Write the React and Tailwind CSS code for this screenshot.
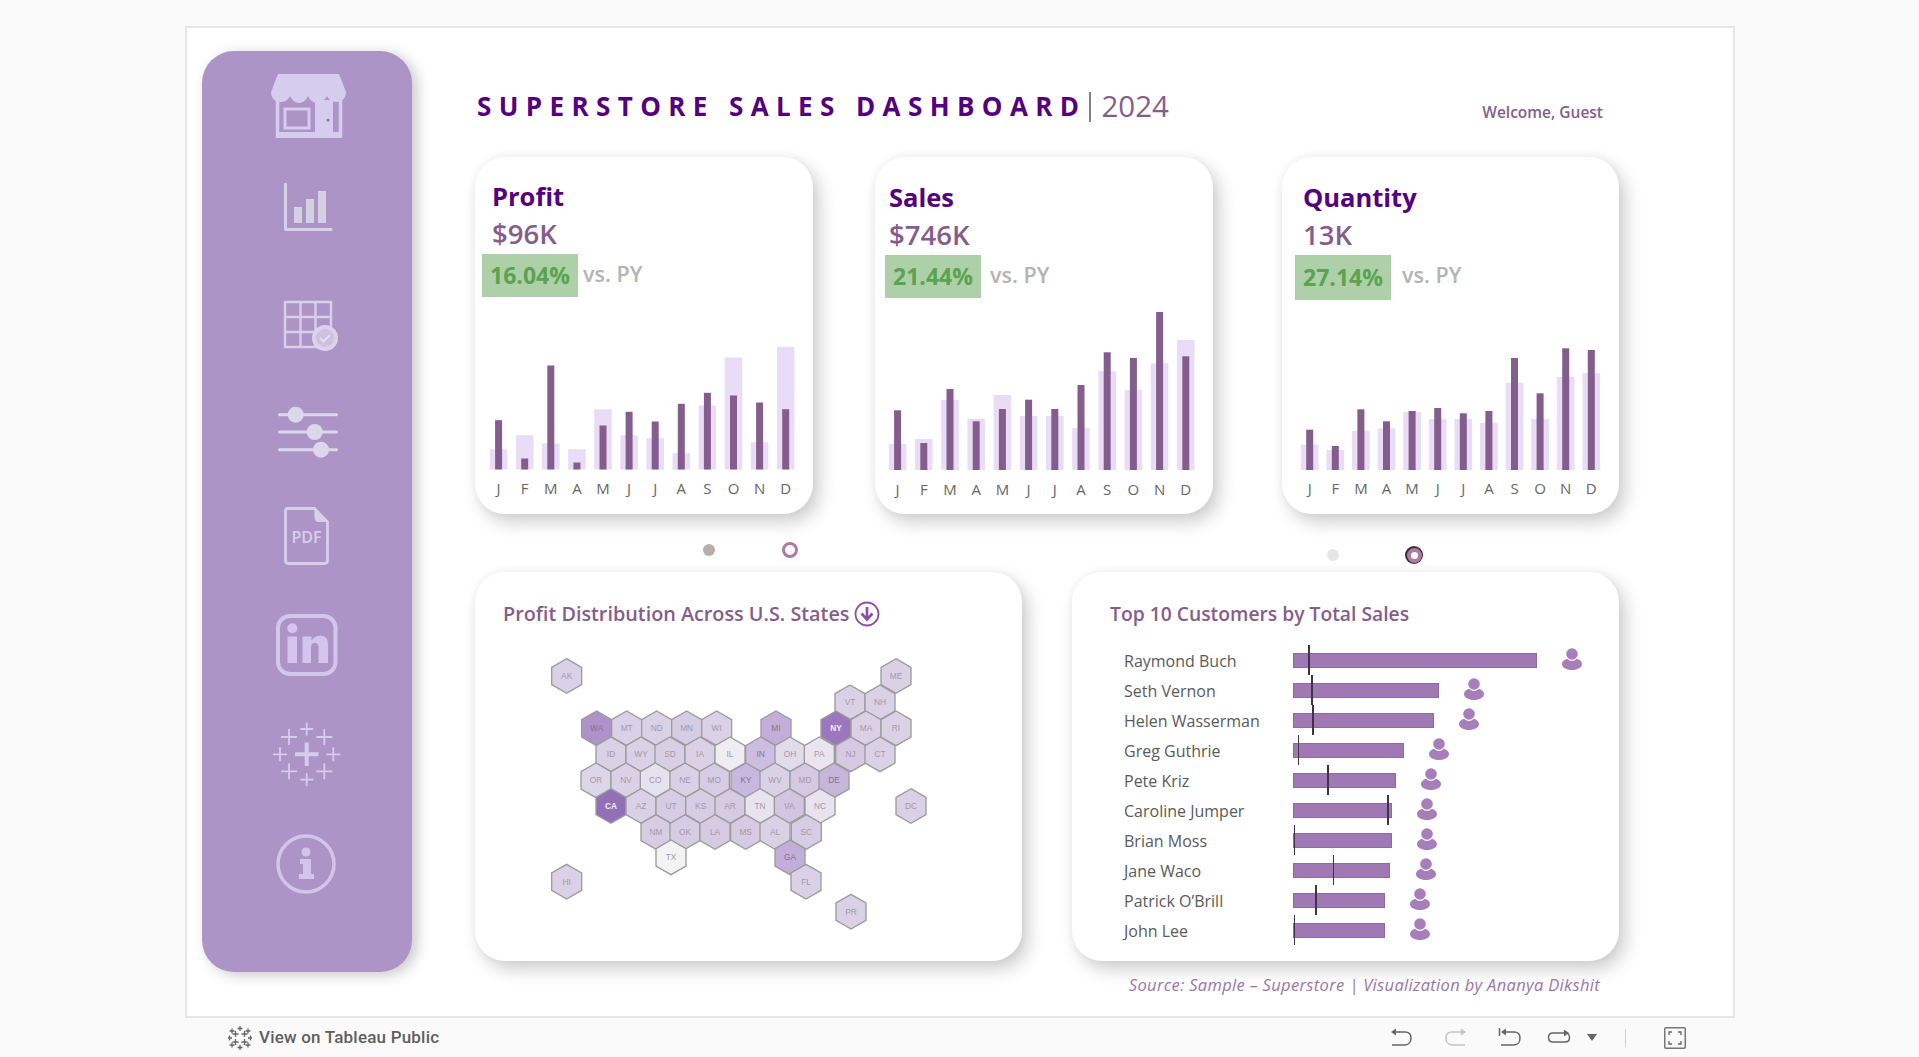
import React from "react";

const MONTHS = ["J","F","M","A","M","J","J","A","S","O","N","D"];

const CARDS = [
  { title:"Profit", value:"$96K", pct:"16.04%", w:"w-[338px]", pt:"pt-[23px]", pl:"pl-[17px]", bl:"ml-[7px]", bw:"w-[96px]", bh:"h-[43px]", vs:"ml-[5px] -mt-[3px]",
    x0:498.6-475, step:26.1, base:165.5, label:"190",
    light:[20.3,34.3,26,20.3,60.3,34.3,31.3,16.3,64,112,27.3,122.7],
    dark:[49.3,11,104,7,44,57.7,48,65.7,76.7,74,67,60.3], lw:17.5 },
  { title:"Sales", value:"$746K", pct:"21.44%", w:"w-[338px]", pt:"pt-[24px]", pl:"pl-[14px]", bl:"ml-[10px]", bw:"w-[96px]", bh:"h-[43px]", vs:"ml-[9px] -mt-[3px]",
    x0:22.6, step:26.2, base:166, label:"191",
    light:[26,31,70,51.3,75,54,54,42,98.7,80,106.7,130],
    dark:[59.7,27,81,48.7,61,70.3,61,85,117.7,112,158,113.7], lw:17.5 },
  { title:"Quantity", value:"13K", pct:"27.14%", w:"w-[337px]", pt:"pt-[24px]", pl:"pl-[21px]", bl:"ml-[13px]", bw:"w-[96px]", bh:"h-[45px]", vs:"ml-[11px] -mt-[5px]",
    x0:1309.7-1282, step:25.6, base:166, label:"190",
    light:[25.3,20,39,41.7,58,51,51,47,87.3,51,93,97],
    dark:[40.3,24,60.7,48.7,59,62,56.7,59,112,76.7,121.7,120], lw:17.7 },
];

const CUSTOMERS = [
  ["Raymond Buch",243.7,15.3,279],
  ["Seth Vernon",146.3,18,181.3],
  ["Helen Wasserman",140.7,19.3,176],
  ["Greg Guthrie",111,4.7,146],
  ["Pete Kriz",103,34.3,138],
  ["Caroline Jumper",99,94,134],
  ["Brian Moss",99,0.7,134],
  ["Jane Waco",97.3,39.7,132.7],
  ["Patrick O’Brill",92,22,127],
  ["John Lee",92,0.7,127],
];

const D="#dad1e6";
const HEXES = [
  ["AK",110,78,D],["ME",1098,78,D],["VT",960,157,D],["NH",1050,157,D],
  ["WA",200,235,"#ae92c9"],["MT",290,235,D],["ND",380,235,D],["MN",470,235,"#d6cce4"],["WI",560,235,D],["MI",738,235,"#c2aed8"],["NY",918,235,"#9b78bd"],["MA",1008,235,D],["RI",1098,235,D],
  ["ID",243,313,D],["WY",333,313,D],["SD",420,313,"#d8cfe5"],["IA",510,313,D],["IL",600,313,"#efecf3"],["IN",692,313,"#cdbde0"],["OH",780,313,"#e1dbea"],["PA",868,313,"#e9e4ef"],["NJ",962,313,"#d5c9e3"],["CT",1050,313,D],
  ["OR",198,391,"#ddd6e8"],["NV",288,391,D],["CO",376,391,"#e6e1ee"],["NE",465,391,D],["MO",553,391,"#d6cce4"],["KY",648,391,"#c8b7de"],["WV",735,391,D],["MD",825,391,"#d5c8e2"],["DE",912,391,"#c7b5da"],
  ["CA",243,468,"#9170b8"],["AZ",333,468,D],["UT",423,468,"#d6cce4"],["KS",512,468,"#d6cce4"],["AR",600,468,"#d6cbe3"],["TN",690,468,"#e8e3ef"],["VA",778,468,"#d2c5e0"],["NC",870,468,"#e8e3ef"],["DC",1143,468,D],
  ["NM",378,546,"#d6cce4"],["OK",465,546,"#d6cce4"],["LA",555,546,"#d6cbe3"],["MS",647,546,"#d6cbe3"],["AL",735,546,D],["SC",829,546,"#d6cce4"],
  ["TX",423,622,"#f3f3f3"],["GA",780,622,"#c2aed8"],["HI",110,695,D],["FL",828,695,D],["PR",963,785,D],
];
const DARK_LABEL = ["WA","MI","KY","GA","DE","IN"];

function hexPoints(cx,cy){
  const r=52, w=45;
  return [[cx,cy-r],[cx+w,cy-r/2],[cx+w,cy+r/2],[cx,cy+r],[cx-w,cy+r/2],[cx-w,cy-r/2]].map(p=>p.join(",")).join(" ");
}

function Chart({c,w}){
  return (
    <svg className="mt-auto block" width={w} height="210" viewBox={`0 0 ${w} 210`}>
      {c.light.map((h,i)=>(
        <rect key={i} x={c.x0+i*c.step-c.lw/2} y={c.base-h} width={c.lw} height={h} fill="#e8dcf7"/>
      ))}
      {c.dark.map((h,i)=>(
        <rect key={i} x={c.x0+i*c.step-3.5} y={c.base-h} width="7" height={h} fill="#855d8c"/>
      ))}
      {MONTHS.map((m,i)=>(
        <text key={i} x={c.x0+i*c.step} y={c.label} textAnchor="middle" fontSize="15" fill="#666" fontFamily="'Open Sans', sans-serif">{m}</text>
      ))}
    </svg>
  );
}

function KpiCard({c,w}){
  return (
    <div className={`${c.w} h-[357px] shrink-0 rounded-[30px] bg-white flex flex-col ${c.pt} shadow-[6px_8px_18px_rgba(0,0,0,0.2),0_-1px_8px_rgba(0,0,0,0.04)]`}>
      <div className={`${c.pl} h-[33px] flex items-center text-[25.5px] font-bold text-[#54007f] leading-none`}>{c.title}</div>
      <div className={`${c.pl} mt-[4px] h-[34px] flex items-center text-[27.5px] font-semibold text-[#855d8c] leading-none`}>{c.value}</div>
      <div className="mt-[3px] flex items-center">
        <div className={`${c.bl} ${c.bw} ${c.bh} bg-[#aed0a8] flex items-center justify-center text-[23px] font-bold text-[#5aa350] leading-none`}>{c.pct}</div>
        <div className={`${c.vs} text-[21.5px] font-semibold text-[#b4b4b4] leading-none`}>vs. PY</div>
      </div>
      <Chart c={c} w={w}/>
    </div>
  );
}

function Person(){
  return (
    <svg width="20" height="22" viewBox="0 0 20 22" className="block">
      <circle cx="10" cy="6" r="5.8" fill="#a67fba"/>
      <path d="M0 16c0-3 3.5-5 5.5-5 1.200 1.300 2.800 2 4.500 2s3.300-.7 4.500-2c2 0 5.500 2 5.500 5 0 3.500-4.500 6-10 6s-10-2.500-10-6z" fill="#a67fba"/>
    </svg>
  );
}

function Sidebar(){
  const c="#d6cdee";
  const plus=[[306.7,727,6.5],[289,735,8],[324.3,735,8],[280,752.3,7],[333.3,752.3,7],[289,769.3,8],[324.3,769.3,8],[306.7,777.7,6.5]];
  return (
    <aside className="w-[210px] h-[921px] shrink-0 rounded-[32px] bg-[#ac94c7] flex flex-col items-center shadow-[5px_3px_14px_rgba(0,0,0,0.22)]">
      <svg className="mt-[23px] block" width="80" height="64" viewBox="267 74 80 64">
        <path d="M278 74H339L346 92C346 98 342 102 337 102C333 102 329 100 327 96C325 100 321 103 317 103C313 103 310 100 308 96C306 100 303 103 299 103C295 103 292 100 290 96C288 100 285 102 280 102C275 102 271 98 271 92Z" fill={c}/>
        <path d="M277.500 100v36.500h63V100" fill="none" stroke={c} strokeWidth="3.500"/>
        <rect x="285" y="109" width="24" height="19" fill="none" stroke={c} strokeWidth="3"/>
        <rect x="315" y="100" width="18" height="36" fill={c}/>
        <rect x="277" y="132" width="64" height="5" fill={c}/>
        <circle cx="328" cy="120" r="1.500" fill="#8d74a8"/>
      </svg>
      <svg className="mt-[45px] block" width="80" height="48" viewBox="267 183 80 48">
        <path d="M285.500 183v46.500H331" fill="none" stroke="#d6d0e4" strokeWidth="3" strokeLinecap="round" strokeLinejoin="round"/>
        <rect x="294" y="207" width="8" height="16" fill="#d6d0e4"/>
        <rect x="306" y="199" width="8" height="24" fill="#d6d0e4"/>
        <rect x="318" y="191" width="8" height="32" fill="#d6d0e4"/>
      </svg>
      <svg className="mt-[69px] block" width="80" height="52" viewBox="267 300 80 52">
        <path d="M285 302h46v45h-46zM285 317h46M285 332h46M300.500 302v45M315.500 302v45" fill="none" stroke="#d9cfea" strokeWidth="2.400"/>
        <circle cx="325" cy="338" r="13" fill="#ddd2ec"/>
        <circle cx="325" cy="338" r="9" fill="#cfbfe0"/>
        <path d="M320 338l3.500 3.500 6.500-6.500" fill="none" stroke="#e6def2" strokeWidth="2.200"/>
      </svg>
      <svg className="mt-[55px] block" width="80" height="52" viewBox="267 406 80 52">
        <g stroke="#dcd8ec" strokeWidth="3" strokeLinecap="round">
          <path d="M279.500 413.700h57M279.500 431h57M279.500 448.700h57"/>
        </g>
        <circle cx="295.700" cy="413.700" r="8" fill="#dcd8ec"/>
        <circle cx="314.700" cy="431" r="8" fill="#dcd8ec"/>
        <circle cx="321" cy="448.700" r="8" fill="#dcd8ec"/>
      </svg>
      <svg className="mt-[48px] block" width="80" height="58" viewBox="267 506 80 58">
        <path d="M288.500 507.500h26l13 13.500v38.500c0 1.800-1.200 3-3 3h-36c-1.800 0-3-1.200-3-3v-49.500c0-1.800 1.200-3 3-3z" fill="none" stroke="#d9cfea" strokeWidth="2.800"/>
        <path d="M314.500 507.500v9c0 2.500 1.500 4.500 4 4.500h9z" fill="#d9cfea"/>
        <text x="306.500" y="542" textAnchor="middle" fontSize="16" fontWeight="600" fill="#d9cfea" fontFamily="'Open Sans', sans-serif">PDF</text>
      </svg>
      <svg className="mt-[48px] block" width="80" height="64" viewBox="267 613 80 64">
        <rect x="278" y="616" width="57.500" height="58" rx="12" fill="none" stroke="#d3c5ee" strokeWidth="4"/>
        <circle cx="292.300" cy="628.300" r="5" fill="#d3c5ee"/>
        <rect x="287.500" y="636.500" width="9.500" height="26.500" fill="#d3c5ee"/>
        <path d="M302.500 636.500h9v4c2-3 5-4.800 9-4.800 6.500 0 7.500 4.500 7.500 10v17.300h-9.500v-15c0-3.200-.8-5-3.500-5-3 0-4 2-4 5v15h-8.500z" fill="#d3c5ee"/>
      </svg>
      <svg className="mt-[45px] block" width="80" height="66" viewBox="267 720 80 66">
        <g stroke="#d6cdee" strokeWidth="1.800">
          {plus.map(([x,y,a],i)=>(<path key={i} d={`M${x-a} ${y}h${2*a}M${x} ${y-a}v${2*a}`}/>))}
        </g>
        <path d="M295 752.300h23.400M306.700 740.500v23.600" stroke="#d6cdee" strokeWidth="4"/>
      </svg>
      <svg className="mt-[46px] block" width="80" height="61" viewBox="267 833 80 61">
        <circle cx="306" cy="863" r="28" fill="none" stroke="#d3c5ea" strokeWidth="3.500"/>
        <circle cx="306" cy="851" r="4.500" fill="#d3c5ea"/>
        <path d="M300 858h11v15h3v5h-15v-5h4v-10h-3z" fill="#d3c5ea"/>
      </svg>
    </aside>
  );
}

function Footer(){
  const pl=[[240,1026.500,2.500],[232,1029,2.500],[248,1029,2.500],[229.500,1036,2.500],[250.500,1036,2.500],[232,1043,2.500],[248,1043,2.500],[240,1045.500,2.500],[235.500,1032,3],[244.500,1032,3],[235.500,1040,3],[244.500,1040,3]];
  return (
    <footer className="h-[39px] flex items-center bg-[#fafafa]">
      <svg className="ml-[228px] block" width="24" height="24" viewBox="228 1024 24 24">
        <g stroke="#666" strokeWidth="1.300">
          {pl.map(([x,y,a],i)=>(<path key={i} d={`M${x-a} ${y}h${2*a}M${x} ${y-a}v${2*a}`}/>))}
        </g>
      </svg>
      <span className="ml-[7px] text-[17px] tracking-[0.2px] font-medium text-[#5f5f5f] font-['Roboto',sans-serif]">View on Tableau Public</span>
      <div className="ml-auto flex items-center mr-[233px]">
        <svg width="24" height="24" viewBox="0 0 24 24" className="block">
          <path d="M7 6h9c4 0 6 2.500 6 6s-2 7-6 7H3" fill="none" stroke="#666" strokeWidth="1.500"/>
          <path d="M2 6l5-3.500v7z" fill="#666"/>
        </svg>
        <svg width="24" height="24" viewBox="0 0 24 24" className="block ml-[31px]">
          <path d="M17 6H8c-4 0-6 2.500-6 6s2 7 6 7h13" fill="none" stroke="#c4c4c4" strokeWidth="1.500"/>
          <path d="M22 6l-5-3.500v7z" fill="#c4c4c4"/>
        </svg>
        <svg width="24" height="24" viewBox="0 0 24 24" className="block ml-[30px]">
          <path d="M8 6h8c4 0 6 2.500 6 6s-2 7-6 7H3" fill="none" stroke="#666" strokeWidth="1.500"/>
          <path d="M3 6l5-3.500v7z" fill="#666"/>
          <path d="M1.500 2v8" stroke="#666" strokeWidth="1.500"/>
        </svg>
        <svg width="24" height="24" viewBox="0 0 24 24" className="block ml-[25px]">
          <path d="M18 7H6c-3 0-4.500 2-4.500 4.500S3 16 6 16h12c3 0 4.500-2 4.500-4.500S21 7 19 7" fill="none" stroke="#666" strokeWidth="1.500"/>
          <path d="M22 7l-5-3.500v7z" fill="#666"/>
        </svg>
        <div className="ml-[16px] w-0 h-0 border-x-[5.5px] border-x-transparent border-t-[7px] border-t-[#666]"></div>
        <div className="ml-[28px] w-px h-[18px] bg-[#cfcfcf]"></div>
        <svg width="22" height="22" viewBox="0 0 22 22" className="block ml-[38px]">
          <rect x="0.750" y="0.750" width="20.500" height="20.500" rx="1" fill="none" stroke="#777" strokeWidth="1.500"/>
          <path d="M5 8V5h3M14 5h3v3M17 14v3h-3M8 17H5v-3" fill="none" stroke="#666" strokeWidth="1.300"/>
        </svg>
      </div>
    </footer>
  );
}

export default function App(){
  return (
    <div className="w-[1919px] h-[1057px] overflow-hidden bg-[#fafafa] font-['Open_Sans',sans-serif]">
      <div className="h-[26px]"></div>
      <div className="ml-[185px] w-[1550px] h-[992px] border-2 border-[#e6e6e6] bg-white flex pt-[23px] pl-[15px]">
        <Sidebar/>
        <main className="ml-[63px] w-[1144px] flex flex-col">
          <div className="mt-[40px] h-[30px] flex items-center">
            <h1 className="ml-[2px] text-[26px] font-bold tracking-[7.400px] text-[#54007f] leading-none whitespace-nowrap">SUPERSTORE SALES DASHBOARD</h1>
            <div className="ml-[3px] w-[2px] h-[30px] bg-[#8a7a9a] mt-[2px]"></div>
            <span className="ml-[10px] text-[29.5px] text-[#855d8c] leading-none">2024</span>
            <span className="ml-auto mr-[16px] mt-[14px] text-[15.5px] font-semibold text-[#855d8c]">Welcome, Guest</span>
          </div>
          <div className="mt-[36px] flex">
            <KpiCard c={CARDS[0]} w={338}/>
            <div className="w-[62px]"></div>
            <KpiCard c={CARDS[1]} w={338}/>
            <div className="w-[69px]"></div>
            <KpiCard c={CARDS[2]} w={337}/>
          </div>
          <div className="h-[58px] flex items-start">
            <div className="ml-[228px] mt-[30px] w-[12px] h-[12px] rounded-full bg-[#b8aea8]"></div>
            <div className="ml-[67px] mt-[28px] w-[16px] h-[16px] rounded-full border-[3px] border-[#b07aa1] bg-white"></div>
            <div className="ml-[529px] mt-[35px] w-[12px] h-[12px] rounded-full bg-[#e6e6e6]"></div>
            <div className="ml-[66px] mt-[32px] w-[18px] h-[18px] rounded-full bg-[#3b2a3b] p-[1.500px]">
              <div className="w-full h-full rounded-full border-[4px] border-[#b07aa1] bg-white"></div>
            </div>
          </div>
          <div className="flex gap-[50px]">
            <section className="w-[547px] h-[389px] shrink-0 rounded-[30px] bg-white shadow-[6px_8px_18px_rgba(0,0,0,0.2),0_-1px_8px_rgba(0,0,0,0.04)] flex flex-col">
              <div className="mt-[28px] ml-[28px] h-[28px] flex items-center">
                <span className="text-[19.8px] font-semibold text-[#855d8c] leading-none whitespace-nowrap">Profit Distribution Across U.S. States</span>
                <svg className="ml-[5px] block" width="26" height="26" viewBox="0 0 26 26">
                  <circle cx="13" cy="13" r="11.500" fill="none" stroke="#8a4fa8" strokeWidth="1.800"/>
                  <path d="M13 6v12M7.500 12.500L13 18.500l5.500-6" fill="none" stroke="#8a4fa8" strokeWidth="2.600"/>
                </svg>
              </div>
              <svg className="ml-[55px] mt-[22px] block" width="420" height="280" viewBox="0 0 1260 840">
                {HEXES.map(([s,x,y,f])=>{
                  const white = s==="CA"||s==="NY";
                  const dark = DARK_LABEL.includes(s);
                  return (
                    <g key={s}>
                      <polygon points={hexPoints(x,y)} fill={f} stroke="#9b9b9b" strokeWidth="4"/>
                      <text x={x} y={y+9} textAnchor="middle" fontSize="25" fill={white?"#f4eefa":dark?"#837590":"#a09aa8"} fontWeight={white?"600":"400"} fontFamily="'Liberation Sans', sans-serif">{s}</text>
                    </g>
                  );
                })}
              </svg>
            </section>
            <section className="w-[547px] h-[389px] shrink-0 rounded-[30px] bg-white shadow-[6px_8px_18px_rgba(0,0,0,0.2),0_-1px_8px_rgba(0,0,0,0.04)] flex flex-col">
              <div className="mt-[28px] ml-[38px] h-[28px] flex items-center text-[19.3px] font-semibold text-[#855d8c] leading-none">Top 10 Customers by Total Sales</div>
              <div className="mt-[17px] flex flex-col">
                {CUSTOMERS.map(([name,bw,tick,ic])=>(
                  <div key={name} className="h-[30px] flex items-center">
                    <span className="ml-[52px] w-[169px] pt-[2px] text-[16px] text-[#5a5a5a] leading-none whitespace-nowrap">{name}</span>
                    <div className="relative h-[30px] flex items-center">
                      <div className="h-[15px] bg-[#a078b3] border border-[#8f68a6]" style={{width:bw}}></div>
                      <div className="absolute top-0 w-[1.500px] h-[30px] bg-[#3f3346]" style={{left:tick}}></div>
                      <div className="absolute top-[3px]" style={{left:ic-10}}><Person/></div>
                    </div>
                  </div>
                ))}
              </div>
            </section>
          </div>
          <div className="mt-[16px] pr-[19px] text-right text-[16.5px] tracking-[0.33px] italic text-[#9a75a8] leading-none whitespace-nowrap">Source: Sample – Superstore | Visualization by Ananya Dikshit</div>
        </main>
      </div>
      <Footer/>
    </div>
  );
}
